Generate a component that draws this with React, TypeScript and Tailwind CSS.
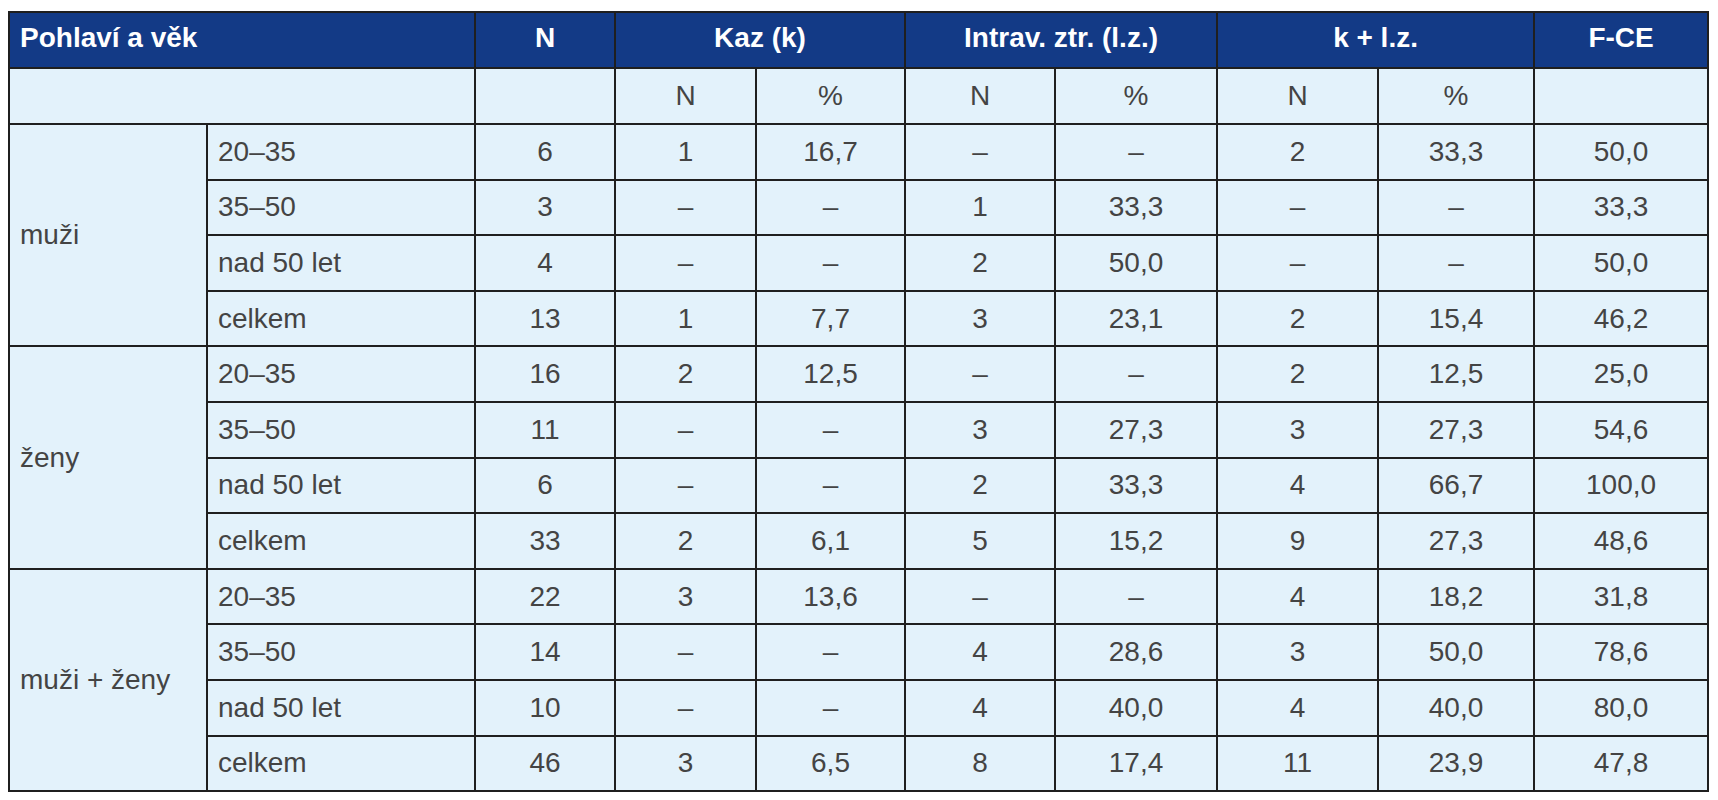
import React from "react";

type Row = { age: string; n: string; kn: string; kp: string; in: string; ip: string; sn: string; sp: string; f: string };

const groups: { label: string; rows: Row[] }[] = [
  {
    label: "muži",
    rows: [
      { age: "20–35", n: "6", kn: "1", kp: "16,7", in: "–", ip: "–", sn: "2", sp: "33,3", f: "50,0" },
      { age: "35–50", n: "3", kn: "–", kp: "–", in: "1", ip: "33,3", sn: "–", sp: "–", f: "33,3" },
      { age: "nad 50 let", n: "4", kn: "–", kp: "–", in: "2", ip: "50,0", sn: "–", sp: "–", f: "50,0" },
      { age: "celkem", n: "13", kn: "1", kp: "7,7", in: "3", ip: "23,1", sn: "2", sp: "15,4", f: "46,2" },
    ],
  },
  {
    label: "ženy",
    rows: [
      { age: "20–35", n: "16", kn: "2", kp: "12,5", in: "–", ip: "–", sn: "2", sp: "12,5", f: "25,0" },
      { age: "35–50", n: "11", kn: "–", kp: "–", in: "3", ip: "27,3", sn: "3", sp: "27,3", f: "54,6" },
      { age: "nad 50 let", n: "6", kn: "–", kp: "–", in: "2", ip: "33,3", sn: "4", sp: "66,7", f: "100,0" },
      { age: "celkem", n: "33", kn: "2", kp: "6,1", in: "5", ip: "15,2", sn: "9", sp: "27,3", f: "48,6" },
    ],
  },
  {
    label: "muži + ženy",
    rows: [
      { age: "20–35", n: "22", kn: "3", kp: "13,6", in: "–", ip: "–", sn: "4", sp: "18,2", f: "31,8" },
      { age: "35–50", n: "14", kn: "–", kp: "–", in: "4", ip: "28,6", sn: "3", sp: "50,0", f: "78,6" },
      { age: "nad 50 let", n: "10", kn: "–", kp: "–", in: "4", ip: "40,0", sn: "4", sp: "40,0", f: "80,0" },
      { age: "celkem", n: "46", kn: "3", kp: "6,5", in: "8", ip: "17,4", sn: "11", sp: "23,9", f: "47,8" },
    ],
  },
];

const th = "border-2 border-[#1f1f1f] px-2.5 pb-1 text-center font-bold text-white";
const td = "border-2 border-[#1f1f1f] px-2.5 text-center";

export default function App() {
  return (
    <div className="min-h-screen bg-white pl-[8px] pt-[11px] font-['Liberation_Sans_Narrow','Liberation_Sans',Arial,sans-serif] text-[28px] leading-none">
      <table className="w-[1699px] table-fixed border-collapse">
        <colgroup>
          <col className="w-[198px]" />
          <col className="w-[268px]" />
          <col className="w-[140px]" />
          <col className="w-[141px]" />
          <col className="w-[149px]" />
          <col className="w-[150px]" />
          <col className="w-[162px]" />
          <col className="w-[161px]" />
          <col className="w-[156px]" />
          <col className="w-[174px]" />
        </colgroup>
        <thead>
          <tr className="h-[56px] bg-[#133a86]">
            <th colSpan={2} className={`${th} text-left`}>Pohlaví a věk</th>
            <th className={th}>N</th>
            <th colSpan={2} className={th}>Kaz (k)</th>
            <th colSpan={2} className={th}>Intrav. ztr. (l.z.)</th>
            <th colSpan={2} className={th}>k + l.z.</th>
            <th className={th}>F-CE</th>
          </tr>
          <tr className="h-[56px] bg-[#e3f2fb] text-[#444]">
            <td colSpan={2} className={td}></td>
            <td className={td}></td>
            <td className={td}>N</td>
            <td className={td}>%</td>
            <td className={td}>N</td>
            <td className={td}>%</td>
            <td className={td}>N</td>
            <td className={td}>%</td>
            <td className={td}></td>
          </tr>
        </thead>
        <tbody className="bg-[#e3f2fb] text-[#444]">
          {groups.map((g) =>
            g.rows.map((r, i) => (
              <tr key={g.label + r.age} className="h-[55.6px]">
                {i === 0 && (
                  <td rowSpan={4} className={`${td} text-left`}>
                    {g.label}
                  </td>
                )}
                <td className={`${td} text-left`}>{r.age}</td>
                <td className={td}>{r.n}</td>
                <td className={td}>{r.kn}</td>
                <td className={td}>{r.kp}</td>
                <td className={td}>{r.in}</td>
                <td className={td}>{r.ip}</td>
                <td className={td}>{r.sn}</td>
                <td className={td}>{r.sp}</td>
                <td className={td}>{r.f}</td>
              </tr>
            ))
          )}
        </tbody>
      </table>
    </div>
  );
}
